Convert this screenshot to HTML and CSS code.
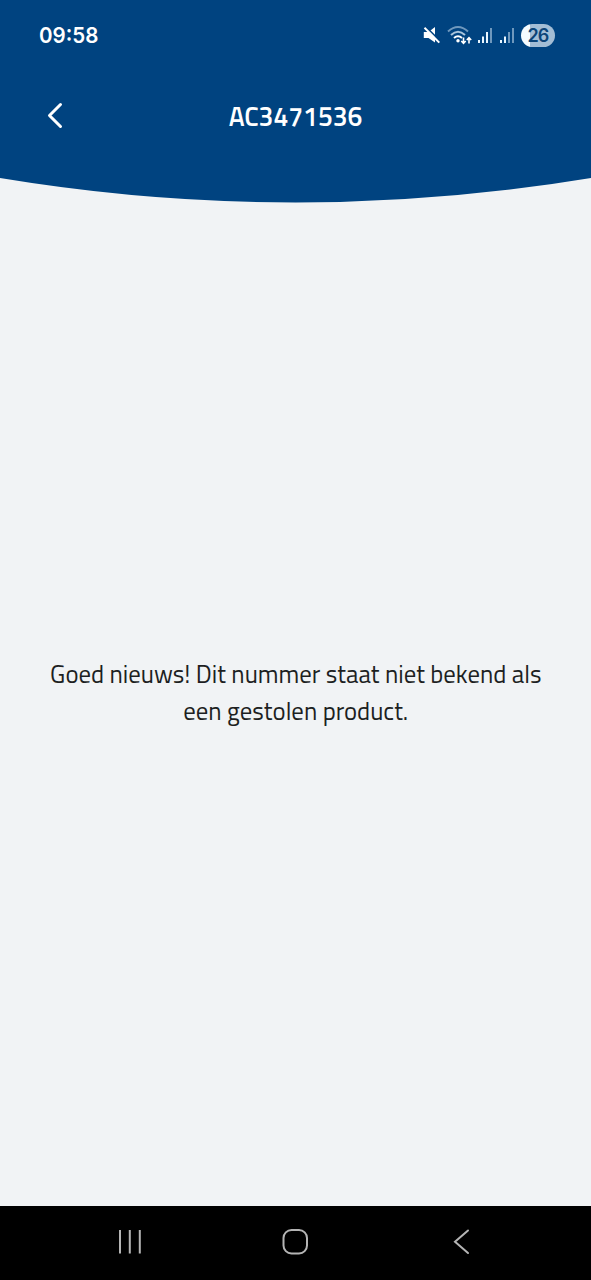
FILE: index.html
```html
<!DOCTYPE html>
<html lang="nl">
<head>
<meta charset="utf-8">
<title>AC3471536</title>
<link rel="stylesheet" href="styles.css">
</head>
<body>
<div class="screen">
  <header class="header">
    <div class="status">
      <span class="clock">09:58</span>
      <div class="indicators">
        <svg class="mute" width="18" height="18" viewBox="0 0 18 18">
          <path d="M.8 6h4.700L12 1v15.500L5.500 12H.8z" fill="#fff"/>
          <path d="M2.500 .5L17.500 15.500" stroke="#004380" stroke-width="1.800"/>
          <path d="M1.500 1.800L16.300 16.600" stroke="#fff" stroke-width="2"/>
        </svg>
        <svg class="wifi" width="25" height="20" viewBox="0 0 25 20" fill="none">
          <path d="M1 6.500Q11 -2.500 21 6.500" stroke="#6f98bd" stroke-width="2"/>
          <path d="M4 10Q11 3.500 18 10" stroke="#a9c5dc" stroke-width="2"/>
          <path d="M7 13Q11 9.500 15 13" stroke="#fff" stroke-width="2"/>
          <circle cx="11" cy="15.800" r="1.700" fill="#fff"/>
          <path d="M16.500 12.500v5.500M14.300 16l2.200 2.300 2.200-2.300M22 18.500V13M19.800 15l2.200-2.300 2.200 2.300" stroke="#fff" stroke-width="1.600"/>
        </svg>
        <svg class="signal" width="16" height="16" viewBox="0 0 16 16">
          <path d="M1 13h2v3H1zM5 9.500h2V16H5zM9 5h2v11H9z" fill="#e9f6ff"/>
          <path d="M13 1h2v15h-2z" fill="#6f98bd"/>
        </svg>
        <svg class="signal-two" width="16" height="16" viewBox="0 0 16 16">
          <path d="M1 13h2v3H1zM5 9.500h2V16H5z" fill="#e9f6ff"/>
          <path d="M9 5h2v11H9zM13 1h2v15h-2z" fill="#6f98bd"/>
        </svg>
        <span class="battery">26</span>
      </div>
    </div>
    <div class="titlebar">
      <svg class="back" width="20" height="28" viewBox="0 0 20 28" fill="none">
        <path d="M15.500 2.500L4.500 13.500l11 11" stroke="#fff" stroke-width="3" stroke-linecap="round" stroke-linejoin="round"/>
      </svg>
      <h1 class="title">AC3471536</h1>
    </div>
  </header>
  <svg class="curve" width="591" height="25" viewBox="0 0 591 25">
    <path d="M0 0Q295.500 49 591 0z" fill="#004380"/>
  </svg>
  <main class="content">
    <p class="message"><span class="line">Goed nieuws! Dit nummer staat niet bekend als</span> <span class="line">een gestolen product.</span></p>
  </main>
  <nav class="navbar">
    <svg width="26" height="28" viewBox="0 0 26 28" fill="none" stroke="#b4b4b4" stroke-width="2">
      <path d="M3 2v23.500M12.800 2v23.500M22.800 2v23.500"/>
    </svg>
    <svg width="28" height="28" viewBox="0 0 28 28" fill="none" stroke="#b4b4b4" stroke-width="2">
      <rect x="2.500" y="2" width="23.500" height="23.500" rx="8"/>
    </svg>
    <svg width="20" height="28" viewBox="0 0 20 28" fill="none" stroke="#b4b4b4" stroke-width="2" stroke-linecap="round">
      <path d="M17 2.500L4 13.800l13 11.200"/>
    </svg>
  </nav>
</div>
</body>
</html>
```
FILE: styles.css
```css
body {
  margin: 0;
}
.screen {
  display: flex;
  flex-direction: column;
  width: 591px;
  height: 1280px;
  overflow: hidden;
  background: #f1f3f5;
}
.header {
  height: 178px;
  background: #004380;
}
.status {
  display: flex;
  align-items: center;
  justify-content: space-between;
  height: 70px;
  padding: 0 36px 0 39px;
}
.clock {
  color: #fff;
  font: 600 22px/30px Inter, sans-serif;
  transform: scaleX(0.935);
  transform-origin: left;
}
.indicators {
  display: flex;
  align-items: center;
}
.wifi {
  margin-left: 6px;
}
.signal {
  margin-left: 4px;
}
.signal-two {
  margin-left: 6px;
}
.mute,
.wifi {
  transform: translateX(-1px);
}
.battery {
  width: 34px;
  height: 23px;
  margin-left: 6px;
  border-radius: 12px;
  background: linear-gradient(90deg, #f4fbff 26%, #a3bdd5 26%);
  color: #0c4478;
  font: 600 18px/23px Inter, sans-serif;
  letter-spacing: -0.9px;
  text-align: center;
}
.titlebar {
  display: grid;
  grid-template-columns: 20px 1fr 20px;
  align-items: center;
  height: 92px;
  padding: 0 45px;
}
.title {
  margin: 0;
  color: #fff;
  font: 600 27px/36px "Titillium Web", "Noto Sans", sans-serif;
  text-align: center;
  transform: scaleX(0.98);
}
.curve {
  display: block;
  flex: none;
}
.content {
  display: flex;
  flex: 1;
  align-items: center;
  justify-content: center;
}
.message {
  margin: 0 0 25px;
  color: #1d1f22;
  font: 400 26px/37px "Titillium Web", "Noto Sans", sans-serif;
  text-align: center;
  white-space: nowrap;
  transform: scaleX(0.953);
}
.line {
  display: block;
}
.navbar {
  display: grid;
  grid-template-columns: 1fr 1fr 1fr;
  align-items: center;
  justify-items: center;
  box-sizing: border-box;
  height: 74px;
  padding: 0 47px 2px;
  background: #000;
}
```
